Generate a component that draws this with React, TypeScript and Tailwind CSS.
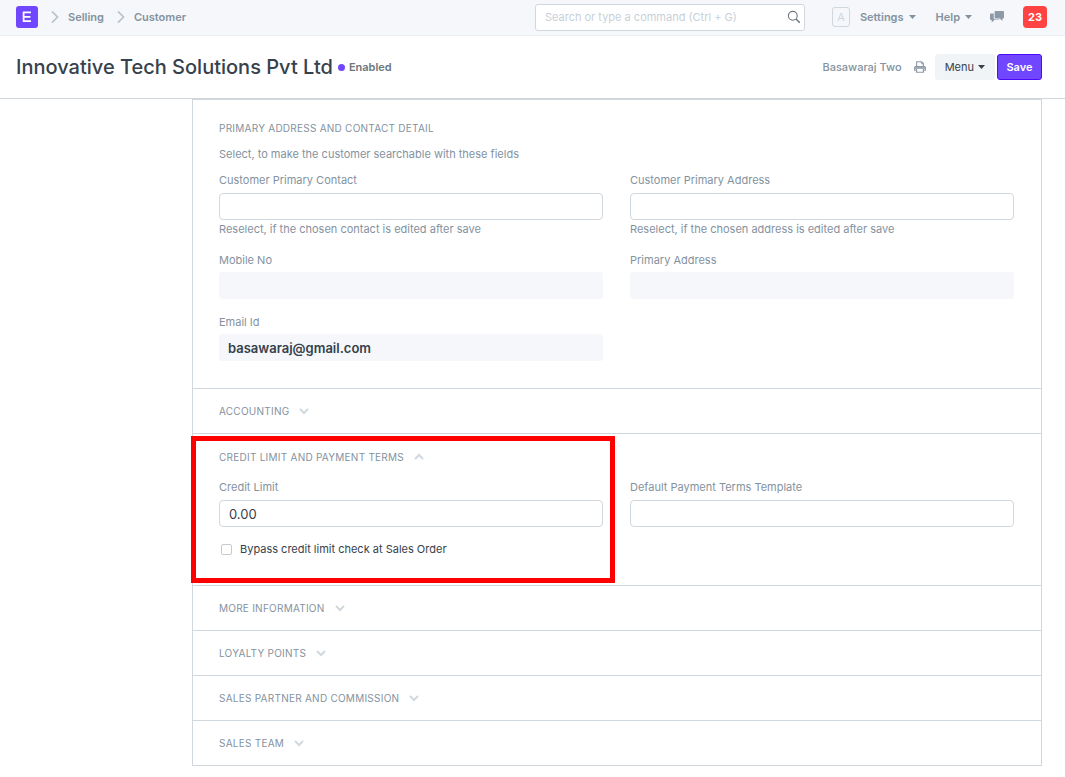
import type { ReactNode } from "react";

function Chevron({ up = false }: { up?: boolean }) {
  return (
    <svg className="h-2 w-2.5 shrink-0" viewBox="0 0 10 8" fill="none" stroke="#d1d8dd" strokeWidth="2">
      <path d={up ? "M1 6 L5 2 L9 6" : "M1 2 L5 6 L9 2"} />
    </svg>
  );
}

function Crumb({ children }: { children: ReactNode }) {
  return (
    <span className="flex items-center gap-[9px]">
      <svg className="h-3 w-2 shrink-0" viewBox="0 0 8 12" fill="none" stroke="#b8c2cc" strokeWidth="1.7">
        <path d="M1 0.5 L6.5 6 L1 11.5" />
      </svg>
      <a href="#" className="font-semibold">{children}</a>
    </span>
  );
}

function Caret() {
  return (
    <svg className="h-1 w-[7px] shrink-0" viewBox="0 0 7 4" fill="currentColor">
      <path d="M0 0 H7 L3.5 4 Z" />
    </svg>
  );
}

type FieldProps = { id: string; label: string; value?: string; help?: string; readOnly?: boolean };

function Field({ id, label, value = "", help, readOnly = false }: FieldProps) {
  return (
    <div className="flex flex-col">
      <label htmlFor={id} className="leading-4">{label}</label>
      <input
        id={id}
        defaultValue={value}
        readOnly={readOnly}
        className={
          readOnly
            ? "mt-1 h-[27px] w-full rounded-[3px] bg-[#f5f7fa] px-[9px] text-[13px] font-semibold text-[#36414c] outline-none"
            : "mt-[5px] h-[27px] w-full rounded-[4px] border border-[#d1d8dd] bg-white px-[9px] text-[13px] text-[#36414c] outline-none"
        }
      />
      {help && <p className="mt-px leading-4">{help}</p>}
    </div>
  );
}

function Collapsed({ title }: { title: string }) {
  return (
    <section className="border-t border-[#d1d8dd]">
      <button type="button" className="flex h-11 w-full items-center gap-2.5 pl-[26px] uppercase">
        <span className="text-[10px] tracking-wide">{title}</span>
        <Chevron />
      </button>
    </section>
  );
}

export default function App() {
  return (
    <div className="min-h-screen bg-white font-['Inter','Liberation_Sans',sans-serif] text-[11px] text-[#8492a0]">
      <nav className="flex h-9 items-center border-b border-[#ebeef2] bg-[#f5f7fa] pr-[18px] pb-px pl-4">
        <div className="flex flex-1 items-center gap-[13px]">
          <a href="#" aria-label="Home">
            <svg className="h-[22px] w-[22px]" viewBox="0 0 22 22">
              <rect width="22" height="22" rx="3" fill="#7047ff" />
              <path d="M7 6.4 H15 M7 10.8 H14.4 M7 15.2 H15 M7.6 6 V15.6" stroke="#fff" strokeWidth="1.8" fill="none" />
            </svg>
          </a>
          <Crumb>Selling</Crumb>
          <Crumb>Customer</Crumb>
        </div>
        <div className="flex h-[27px] w-[270px] items-center rounded-[3px] border border-[#d1d8dd] bg-white pr-[3px] pl-[9px]">
          <input
            aria-label="Search"
            placeholder="Search or type a command (Ctrl + G)"
            className="min-w-0 flex-1 text-[11px] outline-none placeholder:text-[#c8d0d8]"
          />
          <svg className="h-3.5 w-3.5" viewBox="0 0 14 14" fill="none" stroke="#6c7680" strokeWidth="1.1">
            <circle cx="5.8" cy="5.8" r="4.4" />
            <path d="M9 9 L12.8 12.8" strokeWidth="1.5" />
          </svg>
        </div>
        <div className="ml-[27px] flex items-center">
          <span className="flex h-5 w-[18px] items-center justify-center rounded-[3px] border border-[#d1d8dd] text-[#d1d8dd]">A</span>
          <button type="button" className="ml-2.5 flex items-center gap-[5px] font-semibold">Settings <Caret /></button>
          <button type="button" className="ml-5 flex items-center gap-[5px] font-semibold">Help <Caret /></button>
          <button type="button" aria-label="Chat" className="ml-[18px]">
            <svg className="h-3 w-3.5" viewBox="0 0 14 12" fill="#8d99a6">
              <path d="M5.5 0 H13 Q14 0 14 1 V6.5 Q14 7.5 13 7.5 H12.4 V10 L9.8 7.5 H5.5 Q4.6 7.5 4.6 6.5 V1 Q4.6 0 5.5 0 Z" />
              <path d="M3.7 2.6 H1 Q0 2.6 0 3.6 V8 Q0 9 1 9 H1.7 V11.6 L4.3 9 H8.6 Q9.2 9 9.4 8.5 H5.2 Q3.7 8.5 3.7 6.8 Z" />
            </svg>
          </button>
          <button type="button" className="ml-[19px] h-[22px] w-6 rounded-[4px] bg-[#ff4242] font-bold text-white">23</button>
        </div>
      </nav>

      <header className="flex h-[63px] items-center border-b border-[#d1d8dd] pr-[23px] pl-4">
        <h1 className="text-[20px] font-medium text-[#36414c]">Innovative Tech Solutions Pvt Ltd</h1>
        <span className="ml-[5px] h-[7px] w-[7px] rounded-full bg-[#7047ff]" />
        <span className="ml-1 flex-1 font-semibold text-[#6c7680]">Enabled</span>
        <span className="font-medium">Basawaraj Two</span>
        <button type="button" aria-label="Print" className="ml-3">
          <svg className="h-3 w-3" viewBox="0 0 12 12" fill="none" stroke="#8d99a6" strokeWidth="1.1">
            <path d="M2.6 5.6 V0.8 H7.6 L9.4 2.6 V5.6" />
            <path d="M7.4 0.8 V2.8 H9.4" strokeWidth="0.8" />
            <path d="M2.6 9.2 H0.6 V6.6 Q0.6 5.6 1.6 5.6 H10.4 Q11.4 5.6 11.4 6.6 V9.2 H9.4" />
            <path d="M1 7 H11" strokeWidth="1.6" />
            <path d="M2.6 8 V11.3 H9.4 V8" />
          </svg>
        </button>
        <button type="button" className="ml-[9px] flex h-[26px] items-center gap-1 rounded-[3px] bg-[#f0f4f7] px-2.5 text-[#36414c]">
          Menu <Caret />
        </button>
        <button type="button" className="ml-0.5 h-[26px] w-[45px] rounded-[3px] border border-[#4d0aff] bg-[#7047ff] font-semibold text-white">Save</button>
      </header>

      <main className="mr-[23px] ml-48 border border-[#d1d8dd]">
        <section className="pt-5 pr-[27px] pb-[27px] pl-[26px]">
          <h2 className="text-[10px] leading-4 tracking-wide uppercase">Primary Address and Contact Detail</h2>
          <p className="mt-2.5 mb-2.5 leading-4">Select, to make the customer searchable with these fields</p>
          <div className="grid grid-cols-2 gap-x-[27px] gap-y-[15px]">
            <Field id="contact" label="Customer Primary Contact" help="Reselect, if the chosen contact is edited after save" />
            <Field id="address" label="Customer Primary Address" help="Reselect, if the chosen address is edited after save" />
            <Field id="mobile" label="Mobile No" readOnly />
            <Field id="primary-address" label="Primary Address" readOnly />
            <Field id="email" label="Email Id" value="basawaraj@gmail.com" readOnly />
          </div>
        </section>

        <Collapsed title="Accounting" />

        <section className="relative border-t border-[#d1d8dd] pt-[15px] pr-[27px] pb-7 pl-[26px]">
          <button type="button" className="flex h-4 items-center gap-2.5 uppercase">
            <span className="text-[10px] tracking-wide">Credit Limit and Payment Terms</span>
            <Chevron up />
          </button>
          <div className="mt-3.5 grid grid-cols-2 gap-x-[27px]">
            <div>
              <Field id="credit" label="Credit Limit" value="0.00" />
              <label className="mt-3.5 flex h-4 items-center gap-2 pl-0.5 text-[#36414c]">
                <input type="checkbox" className="h-[11px] w-[11px] appearance-none rounded-[2px] border border-[#c4cdd4] bg-white" />
                Bypass credit limit check at Sales Order
              </label>
            </div>
            <Field id="terms" label="Default Payment Terms Template" />
          </div>
          <div className="pointer-events-none absolute top-0.5 bottom-0.5 -left-0.5 w-[424px] border-[5px] border-[#ff0000]" />
        </section>

        <Collapsed title="More Information" />
        <Collapsed title="Loyalty Points" />
        <Collapsed title="Sales Partner and Commission" />
        <Collapsed title="Sales Team" />
      </main>
    </div>
  );
}
